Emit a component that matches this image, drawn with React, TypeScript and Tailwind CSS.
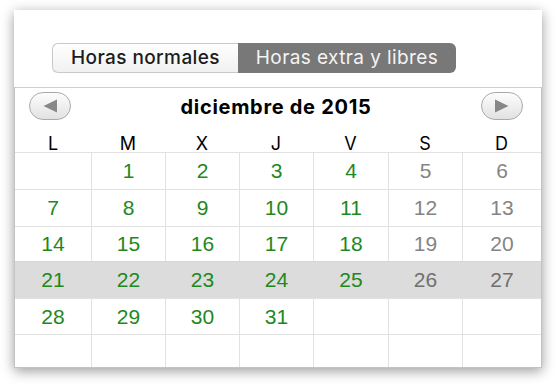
import React from "react";

const font = { fontFamily: '"Liberation Sans", Arial, sans-serif' };
const ui = { fontFamily: 'Inter, "Liberation Sans", Arial, sans-serif' };

const weekdays = ["L", "M", "X", "J", "V", "S", "D"];

const weeks: (number | null)[][] = [
  [null, 1, 2, 3, 4, 5, 6],
  [7, 8, 9, 10, 11, 12, 13],
  [14, 15, 16, 17, 18, 19, 20],
  [21, 22, 23, 24, 25, 26, 27],
  [28, 29, 30, 31, null, null, null],
  [null, null, null, null, null, null, null],
];

const rowHeights = ["h-[37px]", "h-[37px]", "h-[35px]", "h-[37px]", "h-[36px]", "h-[33px]"];

const cols = "grid grid-cols-[76px_74px_74px_74px_75px_74px_79px]";

function ArrowButton({ dir }: { dir: "left" | "right" }) {
  return (
    <button className="flex h-[28px] w-[42px] items-center justify-center rounded-full border border-[#a9a9a9] bg-gradient-to-b from-[#fdfdfd] to-[#e2e2e2]">
      <svg width="16" height="16" viewBox="0 0 16 16">
        {dir === "left" ? (
          <path d="M15 1.5L1.5 8L15 14.5Z" fill="#878787" />
        ) : (
          <path d="M1 1.5L14.5 8L1 14.5Z" fill="#878787" />
        )}
      </svg>
    </button>
  );
}

export default function App() {
  return (
    <div className="h-[384px] w-[558px] overflow-hidden bg-white pt-[10px] pl-[14px]" style={font}>
      <div className="flex h-[358px] w-[528px] flex-col bg-white shadow-[0_3px_12px_rgba(0,0,0,0.4)]">
        <div className="flex h-[78px] items-start pl-[38px] pt-[33px]" style={ui}>
          <div className="flex h-[30px]">
            <div className="flex w-[186px] items-center justify-center rounded-l-[6px] border border-r-0 border-[#c9c9c9] bg-gradient-to-b from-white to-[#f1f1f1] text-[19px] font-medium tracking-[0.4px] text-[#1c1c1c]">
              Horas normales
            </div>
            <div className="flex w-[218px] items-center justify-center rounded-r-[6px] bg-[#787878] text-[19px] tracking-[0.4px] text-[#f4f4f4]">
              Horas extra y libres
            </div>
          </div>
        </div>

        <div className="flex flex-1 flex-col border-x border-b border-t border-[#c3c3c3] border-t-[#cfcfcf]">
          <div className="flex h-[32px] items-start justify-between pl-[14px] pr-[18px] pt-[4px]">
            <ArrowButton dir="left" />
            <div className="text-[20px] font-bold tracking-[0.7px] text-black" style={ui}>
              diciembre de 2015
            </div>
            <ArrowButton dir="right" />
          </div>

          <div className={`${cols} h-[32px]`} style={ui}>
            {weekdays.map((d) => (
              <div key={d} className="flex items-end justify-center text-[18px] leading-[16px] text-black">
                {d}
              </div>
            ))}
          </div>

          {weeks.map((week, wi) => {
            const shaded = wi === 3;
            return (
              <div
                key={wi}
                className={`${cols} ${rowHeights[wi]} border-t ${shaded ? "border-[#d6d6d6] bg-[#dcdcdc]" : "border-[#e2e2e2]"}`}
              >
                {week.map((day, di) => (
                  <div
                    key={di}
                    className={`flex items-center justify-center text-[21px] ${di > 0 ? (shaded ? "border-l border-[#dcdcdc]" : "border-l border-[#e2e2e2]") : ""} ${
                      di >= 5 ? (shaded ? "text-[#6f6f6f]" : "text-[#848484]") : "text-[#1d891d]"
                    }`}
                  >
                    {day ?? ""}
                  </div>
                ))}
              </div>
            );
          })}
        </div>
      </div>
    </div>
  );
}
